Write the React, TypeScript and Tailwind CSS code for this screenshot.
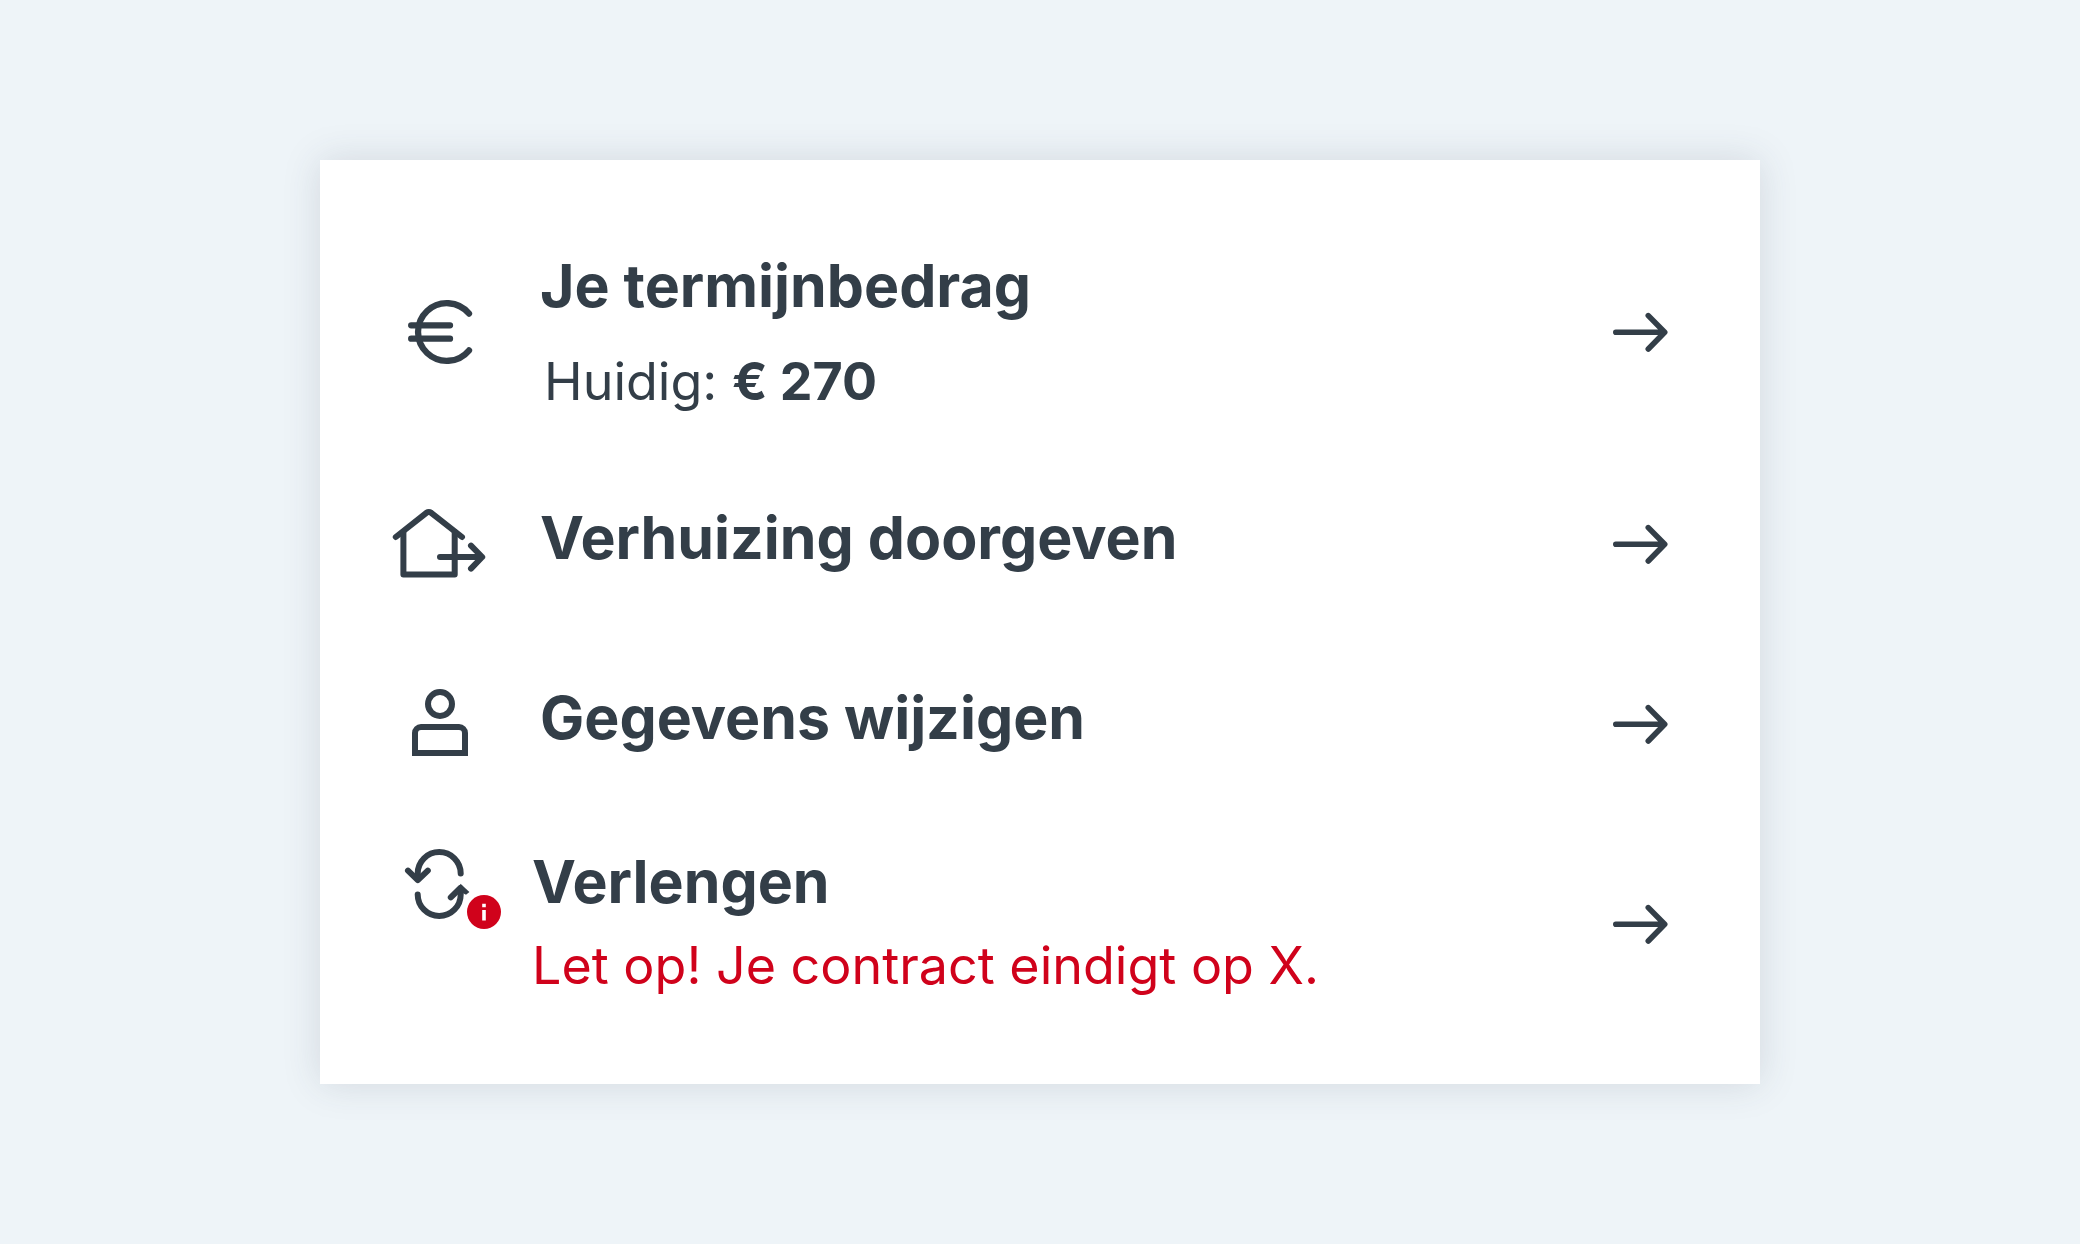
import type { ReactNode } from 'react';
import clsx from 'clsx';

interface ActionRowProps {
  icon: ReactNode;
  title: string;
  children?: ReactNode;
  className?: string;
  textClassName?: string;
}

function EuroIcon() {
  return (
    <svg viewBox="0 2 120 120" className="size-30 shrink-0" fill="none" stroke="currentColor" strokeWidth="6.3" strokeLinecap="round" aria-hidden="true">
      <path d="M89 43.6A28.8 28.8 0 1 0 89 80.4" />
      <path d="M31.2 55.3H70M31.2 68.7H70" />
    </svg>
  );
}

function MoveIcon() {
  return (
    <svg viewBox="0 -6 120 120" className="size-30 shrink-0" fill="none" stroke="currentColor" strokeWidth="6" strokeLinecap="round" strokeLinejoin="round" aria-hidden="true">
      <path d="M15.8 47L46.4 22.8Q48.8 21.2 51.2 22.8L82 47" />
      <path d="M23.4 42V84.5H74.7V42" />
      <path d="M60 67H102M91 55.7L102.2 67L91 78.6" />
    </svg>
  );
}

function PersonIcon() {
  return (
    <svg viewBox="0 -6 120 120" className="size-30 shrink-0" fill="none" stroke="currentColor" strokeWidth="6" aria-hidden="true">
      <circle cx="60" cy="34" r="12" />
      <path d="M35 83V63A6 6 0 0 1 41 57H79A6 6 0 0 1 85 63V83Z" />
    </svg>
  );
}

function RenewIcon() {
  return (
    <svg viewBox="0 0 120 120" className="mt-4 size-30 shrink-0 self-start overflow-visible" fill="none" stroke="currentColor" strokeWidth="6" strokeLinecap="round" aria-hidden="true">
      <path d="M37.7 49V43.5A21.5 21.5 0 0 1 80.7 43.5" />
      <path d="M28 40.6L37.8 50.2L47.8 40.6" strokeLinejoin="round" />
      <path d="M37.7 64.5A21.5 21.5 0 0 0 80.7 64.5V60" />
      <path d="M70.8 67.4L80.4 58" />
      <path d="M80.5 53.8L89.4 62L86 64.8L78 60.5Z" fill="currentColor" stroke="none" />
      {/* notification badge */}
      <circle cx="104" cy="82" r="17" fill="#d0021b" stroke="none" />
      <path d="M102.2 73.8H105.8V77.2H102.2ZM102.2 80H105.8V90.6H102.2Z" fill="#fff" stroke="none" />
    </svg>
  );
}

function ArrowIcon() {
  return (
    <svg viewBox="0 0 100 84" className="h-[84px] w-[100px] shrink-0" fill="none" stroke="currentColor" strokeWidth="5.6" strokeLinecap="round" strokeLinejoin="round" aria-hidden="true">
      <path d="M25.8 42.3H74M58.3 25.6L74.7 42.3L58.3 59" />
    </svg>
  );
}

function ActionRow({ icon, title, children, className = '', textClassName = '' }: ActionRowProps) {
  return (
    <li>
      <a href="#" className={clsx('flex items-center pr-[70px] pl-15', className)}>
        {icon}
        <div className={clsx('flex min-w-0 flex-1 flex-col', textClassName)}>
          <h2 className="text-[59px] leading-20 font-bold">{title}</h2>
          {children}
        </div>
        <ArrowIcon />
      </a>
    </li>
  );
}

export default function App() {
  return (
    <main className="flex min-h-screen items-center justify-center bg-[#eef4f8] px-80 py-40 font-['Inter',sans-serif] text-[#333e48]">
      <ul className="w-full max-w-[1440px] bg-white py-[50px] shadow-[0_0_36px_rgba(51,62,82,0.15)]">
        <ActionRow icon={<EuroIcon />} title="Je termijnbedrag" className="min-h-[244px]" textClassName="gap-6 pb-1 pl-10">
          <p className="pl-1 text-[52px] leading-16">
            Huidig: <strong className="font-bold">€ 270</strong>
          </p>
        </ActionRow>
        <ActionRow icon={<MoveIcon />} title="Verhuizing doorgeven" className="min-h-[180px]" textClassName="pb-3 pl-10" />
        <ActionRow icon={<PersonIcon />} title="Gegevens wijzigen" className="min-h-[180px]" textClassName="pb-3 pl-10" />
        <ActionRow icon={<RenewIcon />} title="Verlengen" className="min-h-[220px]" textClassName="gap-3 pb-2 pl-8">
          <p className="text-[52px] leading-16 text-[#d0021b]">Let op! Je contract eindigt op X.</p>
        </ActionRow>
      </ul>
    </main>
  );
}
